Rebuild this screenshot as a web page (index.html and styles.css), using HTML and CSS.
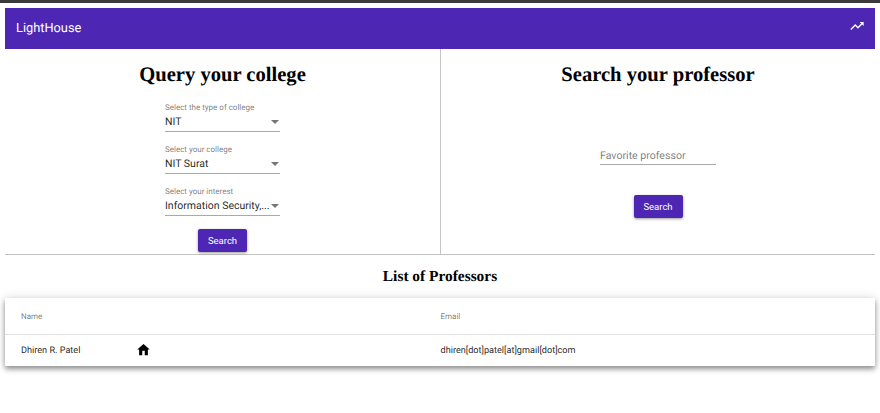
FILE: index.html
```html
<!DOCTYPE html>
<html lang="en">
<head>
<meta charset="utf-8">
<title>LightHouse</title>
<link rel="stylesheet" href="styles.css">
</head>
<body>
<div class="topstrip"></div>
<main class="page">
  <header class="appbar">
    <span class="brand">LightHouse</span>
    <svg class="trend" viewBox="0 0 24 24" width="16" height="16"><path fill="#fff" d="M16 6l2.29 2.29-4.88 4.88-4-4L2 16.59 3.41 18l6-6 4 4 6.3-6.29L22 12V6z"/></svg>
  </header>
  <section class="panels">
    <div class="panel panel-left">
      <h1 class="title">Query your college</h1>
      <div class="fields">
        <div class="field">
          <label class="label">Select the type of college</label>
          <div class="select"><span class="value">NIT</span><span class="caret"></span></div>
        </div>
        <div class="field">
          <label class="label">Select your college</label>
          <div class="select"><span class="value">NIT Surat</span><span class="caret"></span></div>
        </div>
        <div class="field">
          <label class="label">Select your interest</label>
          <div class="select"><span class="value">Information Security,...</span><span class="caret"></span></div>
        </div>
      </div>
      <button class="btn btn-left">Search</button>
    </div>
    <div class="panel panel-right">
      <h1 class="title">Search your professor</h1>
      <div class="textfield">Favorite professor</div>
      <button class="btn btn-right">Search</button>
    </div>
  </section>
  <h2 class="subtitle">List of Professors</h2>
  <div class="table">
    <div class="row row-head">
      <div class="cell-name">Name</div>
      <div class="cell-email">Email</div>
    </div>
    <div class="row row-body">
      <div class="cell-name">
        <span class="prof">Dhiren R. Patel</span>
        <svg class="home" viewBox="0 0 24 24" width="15" height="15"><path fill="#000" d="M10 21v-7h4v7h5v-9h3L12 3 2 12h3v9z"/></svg>
      </div>
      <div class="cell-email">dhiren[dot]patel[at]gmail[dot]com</div>
    </div>
  </div>
</main>
</body>
</html>
```

FILE: styles.css
```css
* { box-sizing: border-box; }
html, body { margin: 0; padding: 0; background: #fff; }
body { font-family: Roboto, "Liberation Sans", sans-serif; color: rgba(0,0,0,.87); height: 413px; overflow: hidden; text-rendering: geometricPrecision; }
.topstrip { height: 3px; background: #3a3a3a; }
.page { padding: 5px 5px 0; }
.appbar { height: 41px; background: #4d27b3; color: #fff; display: flex; justify-content: space-between; align-items: flex-start; padding: 0 10px; }
.brand { font-size: 12.8px; line-height: 42px; padding-left: 1px; }
.trend { margin-top: 10px; }
.panels { display: flex; height: 206px; border-bottom: 1px solid #c4c4c4; }
.panel { display: flex; flex-direction: column; align-items: center; }
.panel-left { width: 436px; border-right: 1px solid #c4c4c4; }
.panel-right { flex: 1; }
.title { font-family: "Liberation Serif", serif; font-weight: 700; font-size: 20.6px; line-height: 24px; margin: 14px 0 0; color: #000; }
.fields { display: flex; flex-direction: column; gap: 11px; margin-top: 15px; width: 115px; }
.field { height: 31px; }
.label { display: block; font-size: 8px; line-height: 11px; color: rgba(0,0,0,.54); white-space: nowrap; }
.select { height: 19px; display: flex; justify-content: space-between; align-items: center; border-bottom: 1px solid #a9a9a9; font-size: 10.5px; padding-bottom: 1px; }
.value { white-space: nowrap; }
.caret { width: 0; height: 0; border-left: 4px solid transparent; border-right: 4px solid transparent; border-top: 4px solid #757575; margin-right: 1px; }
.btn { background: #4d27b3; color: #fff; border: 0; border-radius: 2px; font-family: Roboto, sans-serif; font-size: 9.5px; width: 49px; height: 23px; box-shadow: 0 1px 3px rgba(0,0,0,.4); padding: 0; }
.btn-left { margin-top: 12px; }
.btn-right { margin-top: 30px; }
.textfield { margin-top: 58px; width: 116px; height: 20px; border-bottom: 1px solid #a9a9a9; font-size: 10.6px; padding-top: 2px; line-height: 18px; color: rgba(0,0,0,.54); }
.subtitle { font-family: "Liberation Serif", serif; font-weight: 700; font-size: 15.4px; line-height: 18px; margin: 13px 0 0; text-align: center; color: #000; }
.table { margin-top: 12px; background: #fff; box-shadow: 0 3px 5px rgba(0,0,0,.4), 0 0 10px rgba(0,0,0,.12); }
.row { display: flex; align-items: center; padding-left: 16px; padding-top: 1px; }
.row-head { height: 37px; border-bottom: 1px solid #e0e0e0; font-size: 8px; color: rgba(0,0,0,.54); }
.row-body { height: 31px; font-size: 9.15px; }
.cell-name { width: 419.5px; display: flex; align-items: center; }
.prof { width: 115px; }
.home { display: block; margin-top: -4px; }
```
